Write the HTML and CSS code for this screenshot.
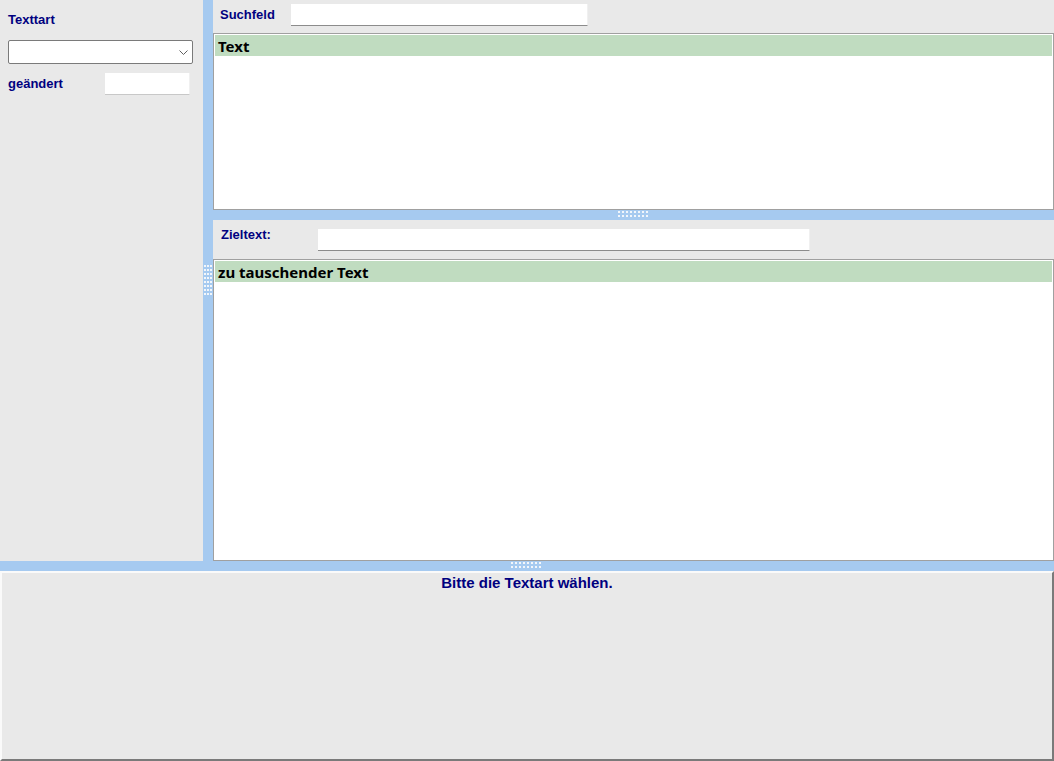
FILE: index.html
```html
<!DOCTYPE html>
<html lang="de">
<head>
    <meta charset="UTF-8">
    <title>Textbausteine tauschen</title>
    <link rel="stylesheet" href="styles.css">
</head>
<body>
    <div class="app">
        <div class="main">
            <div class="side">
                <div class="label">Texttart</div>
                <div class="select">
                    <svg class="chevron" width="9" height="6" viewBox="0 0 9 6">
                        <path d="M0.5 0.5 L4.5 4.5 L8.5 0.5" fill="none" stroke="#606060" stroke-width="1"/>
                    </svg>
                </div>
                <div class="side-row">
                    <span class="label side-label">geändert</span>
                    <div class="field field-small"></div>
                </div>
            </div>

            <div class="vsplit"><div class="grip grip-v"></div></div>

            <div class="content">
                <div class="search-row">
                    <span class="label search-label">Suchfeld</span>
                    <div class="field field-search"></div>
                </div>
                <div class="grid grid-top">
                    <div class="grid-head">Text</div>
                </div>

                <div class="hsplit"><div class="grip grip-h"></div></div>

                <div class="target-row">
                    <span class="label target-label">Zieltext:</span>
                    <div class="field field-target"></div>
                </div>
                <div class="grid grid-bottom">
                    <div class="grid-head">zu tauschender Text</div>
                </div>
            </div>
        </div>

        <div class="hsplit"><div class="grip grip-h"></div></div>

        <div class="status">Bitte die Textart wählen.</div>
    </div>
</body>
</html>
```

FILE: styles.css
```css
html, body {
    margin: 0;
    padding: 0;
}
body {
    font-family: "Liberation Sans", Arial, sans-serif;
    background-color: #e9e9e9;
    width: 1054px;
    height: 761px;
    overflow: hidden;
}
.app {
    display: flex;
    flex-direction: column;
    height: 761px;
}
.main {
    display: flex;
    height: 561px;
}
.label {
    color: #000080;
    font-size: 13px;
    font-weight: bold;
    line-height: 15px;
}

/* left side */
.side {
    width: 203px;
    box-sizing: border-box;
    padding: 12px 8px 0 8px;
}
.select {
    position: relative;
    margin-top: 13px;
    width: 185px;
    height: 24px;
    box-sizing: border-box;
    background-color: #fff;
    border: 1px solid #7a7a7a;
    border-radius: 2px;
}
.chevron {
    position: absolute;
    right: 4px;
    top: 9px;
}
.side-row {
    display: flex;
    align-items: center;
    margin-top: 9px;
}
.side-label {
    width: 97px;
    margin-top: -2px;
}
.field {
    background-color: #fff;
    box-sizing: border-box;
    border-bottom: 1px solid #c8c8c8;
    border-right: 1px solid #f0f0f0;
}
.field-small {
    width: 85px;
    height: 22px;
}

/* splitters */
.vsplit {
    width: 10px;
    background-color: #a6caf0;
    display: flex;
    align-items: center;
    justify-content: center;
}
.hsplit {
    height: 10px;
    flex-shrink: 0;
    background-color: #a6caf0;
    display: flex;
    align-items: center;
    justify-content: center;
}
.grip {
    background-image: radial-gradient(circle at 1px 1px, #f2f6fb 1px, transparent 1.3px);
    background-size: 4px 4px;
}
.grip-h {
    width: 32px;
    height: 8px;
}
.grip-v {
    width: 9px;
    height: 32px;
    background-size: 3px 4px;
}

/* right side */
.content {
    flex: 1;
    display: flex;
    flex-direction: column;
}
.search-row {
    height: 33px;
    box-sizing: border-box;
    display: flex;
    align-items: flex-start;
    padding: 4px 0 0 7px;
}
.search-label {
    width: 71px;
    line-height: 22px;
}
.field-search {
    width: 297px;
    height: 22px;
    border-bottom-color: #8c8c8c;
}
.target-row {
    height: 39px;
    box-sizing: border-box;
    display: flex;
    align-items: flex-start;
    padding: 7px 0 0 8px;
}
.target-label {
    width: 97px;
}
.field-target {
    margin-top: 2px;
    width: 492px;
    height: 22px;
    border-bottom-color: #8c8c8c;
}
.grid {
    box-sizing: border-box;
    background-color: #fff;
    border: 1px solid #a0a0a0;
    padding: 1px;
}
.grid-top {
    height: 177px;
}
.grid-bottom {
    flex: 1;
}
.grid-head {
    height: 21px;
    box-sizing: border-box;
    padding: 1px 0 0 3px;
    line-height: 21px;
    background-color: #c0dcc0;
    color: #000;
    font-family: "Noto Sans", sans-serif;
    font-size: 15px;
    font-weight: bold;
}

/* bottom message panel */
.status {
    flex: 1;
    box-sizing: border-box;
    border: 2px solid;
    border-color: #fafafa #7a7a7a #7a7a7a #fafafa;
    padding-top: 1px;
    text-align: center;
    color: #000080;
    font-size: 15px;
    font-weight: bold;
    line-height: 17px;
}
```
